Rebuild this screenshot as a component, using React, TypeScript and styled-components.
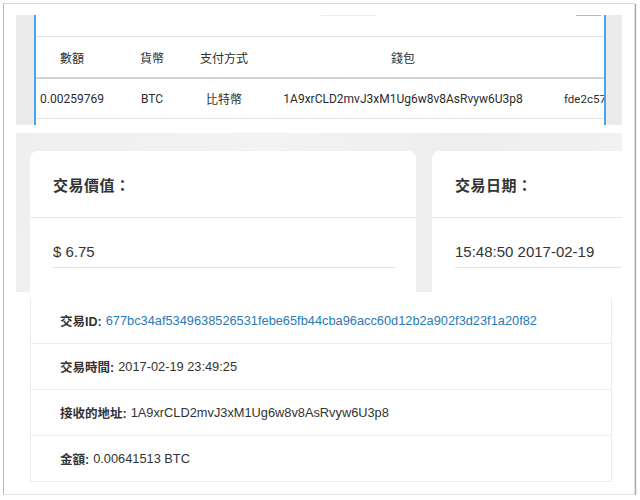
import React from "react";
import styled, { createGlobalStyle } from "styled-components";

const GlobalStyle = createGlobalStyle`
  html, body {
    margin: 0;
    padding: 0;
    background: #ffffff;
  }
  body {
    font-family: "Liberation Sans", "Noto Sans CJK TC", sans-serif;
    color: #333;
  }
`;

const Frame = styled.div`
  margin: 3px 0 0 3px;
  width: 632px;
  height: 492px;
  box-sizing: border-box;
  background: #fff;
  border: 1px solid #e2e2e2;
  border-left-color: #b9b9b9;
  border-top-color: #d6d6d6;
  box-shadow: 1px 1px 1px rgba(0, 0, 0, 0.35);
  padding: 11px 12px 0 12px;
  display: flex;
  flex-direction: column;
  overflow: hidden;
`;

/* ---------- section 1 : table screenshot ---------- */

const TableShot = styled.div`
  height: 110px;
  display: grid;
  grid-template-columns: 18px 2px 1fr 2px 16px;
  font-family: Roboto, "Noto Sans CJK TC", sans-serif;
  font-size: 12px;
  color: #2b2b2b;
`;

const Gutter = styled.div`
  background: #ecebeb;
`;

const BlueRule = styled.div`
  background: #4aa3ee;
`;

const TableBody = styled.div`
  display: flex;
  flex-direction: column;
  overflow: hidden;
  background: #fff;
`;

const TopStrip = styled.div`
  height: 21px;
  border-bottom: 1px solid #e3e3e3;
  display: flex;
  align-items: flex-start;
`;

const TabMark = styled.div<{ $left: number; $w: number; $c: string }>`
  margin-left: ${(p) => p.$left}px;
  width: ${(p) => p.$w}px;
  height: 1px;
  background: ${(p) => p.$c};
`;

const TRow = styled.div<{ $h: number; $border: string }>`
  height: ${(p) => p.$h}px;
  display: grid;
  grid-template-columns: 72px 88px 56px 302px 1fr;
  align-items: center;
  border-bottom: ${(p) => p.$border};
  white-space: nowrap;
`;

const TCell = styled.div<{ $left?: boolean }>`
  text-align: ${(p) => (p.$left ? "left" : "center")};
  padding-left: ${(p) => (p.$left ? "10px" : "0")};
  font-size: ${(p) => (p.$left ? "11.5px" : "inherit")};
`;

/* ---------- section 2 : cards on grey ---------- */

const CardShot = styled.div`
  margin-top: 8px;
  height: 159px;
  background: linear-gradient(100deg, #efefef 0%, #f3f3f3 40%, #eeeeee 70%, #f2f2f2 100%);
  padding: 18px 0 0 14px;
  box-sizing: border-box;
  display: flex;
  gap: 16px;
  overflow: hidden;
`;

const Card = styled.div<{ $w: number }>`
  flex: 0 0 ${(p) => p.$w}px;
  background: #fff;
  border-radius: 8px 8px 0 0;
  display: flex;
  flex-direction: column;
`;

const CardHead = styled.div`
  height: 66px;
  border-bottom: 1px solid #e6e6e6;
  display: flex;
  align-items: center;
  padding-left: 23px;
  font-size: 15px;
  font-weight: bold;
  color: #333;
  letter-spacing: 0.5px;
`;

const CardValue = styled.div<{ $right: number }>`
  margin: 25px ${(p) => p.$right}px 0 23px;
  padding-bottom: 7px;
  border-bottom: 1px solid #e3e3e3;
  font-size: 15px;
  color: #333;
  white-space: nowrap;
`;

/* ---------- section 3 : detail list ---------- */

const ListShot = styled.div`
  margin: 6px 0 0 14px;
  width: 580px;
  border: 1px solid #ececec;
  border-top: none;
`;

const ListRow = styled.div`
  height: 45px;
  display: flex;
  align-items: center;
  padding-left: 29px;
  font-size: 12.8px;
  color: #333;
  white-space: nowrap;
  & + & {
    border-top: 1px solid #ececec;
  }
`;

const Label = styled.span`
  font-weight: bold;
  font-size: 12.5px;
  margin-right: 4px;
`;

const Link = styled.span`
  color: #2a7ab9;
`;

const headers = ["數額", "貨幣", "支付方式", "錢包", ""];
const values = [
  "0.00259769",
  "BTC",
  "比特幣",
  "1A9xrCLD2mvJ3xM1Ug6w8v8AsRvyw6U3p8",
  "fde2c57",
];

const details = [
  { label: "交易時間:", value: "2017-02-19 23:49:25" },
  { label: "接收的地址:", value: "1A9xrCLD2mvJ3xM1Ug6w8v8AsRvyw6U3p8" },
  { label: "金額:", value: "0.00641513 BTC" },
];

export default function App() {
  return (
    <>
      <GlobalStyle />
      <Frame>
        <TableShot>
          <Gutter />
          <BlueRule />
          <TableBody>
            <TopStrip>
              <TabMark $left={285} $w={55} $c="#ececec" />
              <TabMark $left={200} $w={25} $c="#b8b8b8" />
            </TopStrip>
            <TRow $h={40} $border="2px solid #d2d2d2">
              {headers.map((h, i) => (
                <TCell key={i}>{h}</TCell>
              ))}
            </TRow>
            <TRow $h={39} $border="1px solid #e6e6e6">
              {values.map((v, i) => (
                <TCell key={i} $left={i === 4}>
                  {v}
                </TCell>
              ))}
            </TRow>
          </TableBody>
          <BlueRule />
          <Gutter />
        </TableShot>

        <CardShot>
          <Card $w={386}>
            <CardHead>交易價值：</CardHead>
            <CardValue $right={21}>$ 6.75</CardValue>
          </Card>
          <Card $w={300}>
            <CardHead>交易日期：</CardHead>
            <CardValue $right={0}>15:48:50 2017-02-19</CardValue>
          </Card>
        </CardShot>

        <ListShot>
          <ListRow>
            <Label>交易ID:</Label>
            <Link>677bc34af5349638526531febe65fb44cba96acc60d12b2a902f3d23f1a20f82</Link>
          </ListRow>
          {details.map((d) => (
            <ListRow key={d.label}>
              <Label>{d.label}</Label>
              {d.value}
            </ListRow>
          ))}
        </ListShot>
      </Frame>
    </>
  );
}
